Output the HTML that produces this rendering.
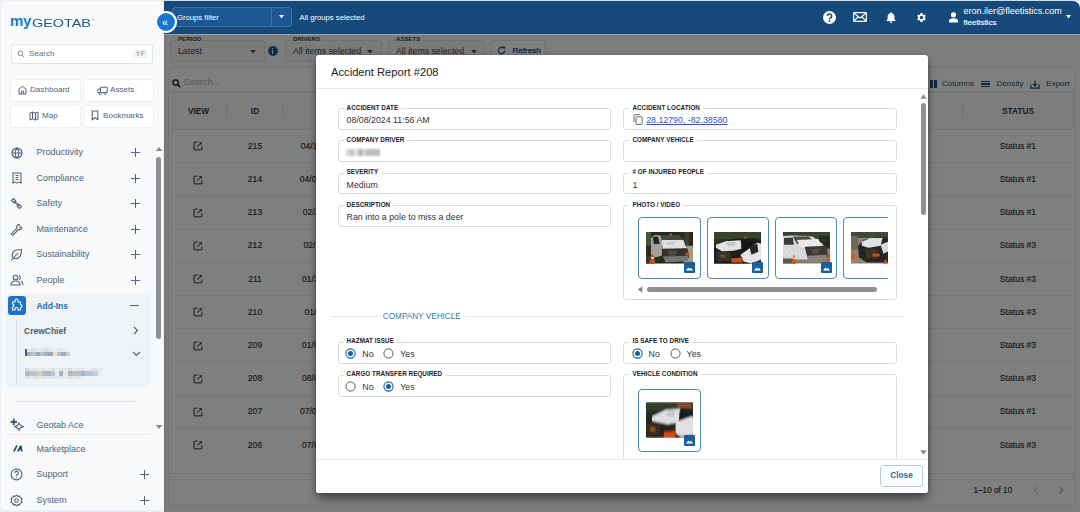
<!DOCTYPE html>
<html><head><meta charset="utf-8">
<style>
*{box-sizing:border-box;margin:0;padding:0}
svg{display:block}
html,body{width:1080px;height:512px;overflow:hidden;background:#fff;font-family:"Liberation Sans",sans-serif;position:relative}
.a{position:absolute}
/* sidebar */
#side{left:0;top:0;width:164px;height:512px;background:#eceff2}
.nav{position:absolute;left:36.5px;font-size:9px;color:#4b6580;white-space:nowrap}
.plus{position:absolute;left:130px;width:9px;height:9px}
.plus:before{content:"";position:absolute;left:0;top:4px;width:9px;height:1px;background:#4b6580}
.plus:after{content:"";position:absolute;left:4px;top:0;width:1px;height:9px;background:#4b6580}
.qbtn{position:absolute;height:20px;background:#fff;border-radius:3px;box-shadow:0 0 0 1px #eef1f4,0 1px 1px #e6eaee;font-size:8px;color:#4b6580;text-align:center;line-height:20px}
/* header */
#hdr{left:164px;top:1px;width:916px;height:33px;background:#154a7a;border-top-right-radius:7px}
/* content */
#content{left:164px;top:34px;width:916px;height:478px;background:#fff}
#overlay{left:164px;top:34px;width:916px;height:478px;background:rgba(0,0,0,0.5)}
/* modal */
#modal{left:316px;top:55px;width:612px;height:437px;background:#fff;border-radius:3px}
.fld{position:absolute;border:1px solid #d9dde2;border-radius:3px;background:#fff}
.lbl{position:absolute;font-size:6.3px;font-weight:bold;color:#222;background:#fff;padding:0 3px;white-space:nowrap;letter-spacing:0.05px}
.val{position:absolute;font-size:8.8px;color:#333;white-space:nowrap}
.fbox{position:absolute;border:1px solid #e0e0e0;border-radius:3px;background:#f6f6f6}
.flbl{position:absolute;font-size:6.1px;font-weight:bold;color:#333;background:#f8fbfb;padding:0 1px;white-space:nowrap}
.ftxt{position:absolute;font-size:8.75px;color:#444;white-space:nowrap}
.cell{position:absolute;font-size:8.6px;color:#333;white-space:nowrap;text-align:center;-webkit-text-stroke:0.15px #333}
.hcell{position:absolute;font-size:8.3px;font-weight:bold;color:#333;white-space:nowrap;text-align:center}
.card{position:absolute;width:62.3px;height:61.7px;border:1px solid #4f86ba;border-radius:4px;background:#fff}
</style></head><body>

<!-- SIDEBAR -->
<div id="side" class="a">
  <div class="a" style="left:1px;top:1px;width:162px;height:509px;background:#f7f9fb;border-radius:5px;box-shadow:0 0 0 1px #eceff3"></div>
  <!-- logo -->
  <div class="a" style="left:10px;top:13px;font-size:15px;line-height:16px;font-weight:bold;color:#1a78cc;letter-spacing:-0.3px">my</div>
  <div class="a" style="left:31.8px;top:16.8px;font-size:11px;line-height:12px;color:#22578a;transform-origin:0 0;transform:scaleX(1.31)">GEOTAB</div>
  <div class="a" style="left:91.5px;top:18.8px;width:3.5px;height:1.2px;background:#b5c4d2"></div>
  <!-- search -->
  <div class="a" style="left:11px;top:44px;width:142px;height:20px;background:#fff;border:1px solid #dde4ea;border-radius:3px"></div>
  <svg class="a" style="left:17px;top:50px" width="8" height="8" viewBox="0 0 8 8"><circle cx="3.4" cy="3.4" r="2.4" fill="none" stroke="#6b7f92" stroke-width="0.9"/><path d="M5.2 5.2L7 7" stroke="#6b7f92" stroke-width="0.9"/></svg>
  <div class="a" style="left:29px;top:49px;font-size:8px;color:#5d7186">Search</div>
  <div class="a" style="left:133px;top:49px;width:14px;height:10px;background:#f1f3f5;border-radius:2px;font-size:7px;color:#7a8a99;text-align:center;line-height:10px">&#8679;F</div>
  <!-- quick buttons -->
  <div class="qbtn" style="left:11px;top:80px;width:69px;height:21px"></div>
  <div class="qbtn" style="left:84px;top:80px;width:69px;height:21px"></div>
  <div class="qbtn" style="left:11px;top:106px;width:69px;height:21px"></div>
  <div class="qbtn" style="left:84px;top:106px;width:69px;height:21px"></div>
  <svg class="a" style="left:18px;top:85px" width="9" height="10" viewBox="0 0 9 10"><path d="M1 4.2L4.5 1.2L8 4.2V9H1Z M3.4 9V6.2H5.6V9" fill="none" stroke="#4b6580" stroke-width="1"/></svg>
  <div class="a" style="left:30px;top:85px;font-size:8.1px;color:#4b6580">Dashboard</div>
  <svg class="a" style="left:97px;top:86px" width="11" height="9" viewBox="0 0 11 9"><path d="M3.5 1.2H10.2V6.6H3.5Z M3.5 3H1.6L0.8 4.6V6.6H3.5" fill="none" stroke="#4b6580" stroke-width="1" stroke-linejoin="round"/><circle cx="3" cy="7.4" r="1.1" fill="#fff" stroke="#4b6580" stroke-width="0.9"/><circle cx="8.2" cy="7.4" r="1.1" fill="#fff" stroke="#4b6580" stroke-width="0.9"/></svg>
  <div class="a" style="left:110px;top:85px;font-size:8.1px;color:#4b6580">Assets</div>
  <svg class="a" style="left:29px;top:111px" width="10" height="10" viewBox="0 0 10 10"><path d="M1 2L3.5 1L6.5 2L9 1V8L6.5 9L3.5 8L1 9Z M3.5 1V8 M6.5 2V9" fill="none" stroke="#4b6580" stroke-width="1"/></svg>
  <div class="a" style="left:42px;top:111px;font-size:8.1px;color:#4b6580">Map</div>
  <svg class="a" style="left:91px;top:109.5px" width="8" height="11" viewBox="0 0 8 11"><path d="M1.2 1H6.8V9.8L4 7.6L1.2 9.8Z" fill="none" stroke="#4b6580" stroke-width="1.1" stroke-linejoin="round"/></svg>
  <div class="a" style="left:103px;top:111px;font-size:8.1px;color:#4b6580">Bookmarks</div>
  <!-- nav -->
  <svg class="a" style="left:11px;top:147.2px" width="12" height="12" viewBox="0 0 12 12"><circle cx="6" cy="6" r="5" fill="none" stroke="#4b6580" stroke-width="1.2"/><path d="M1 6H11 M6 1C3.5 3.5 3.5 8.5 6 11 M6 1C8.5 3.5 8.5 8.5 6 11" fill="none" stroke="#4b6580" stroke-width="1.1"/></svg>
  <div class="nav" style="top:147.2px">Productivity</div><div class="plus" style="top:148.2px;left:131px"></div>
  <svg class="a" style="left:12px;top:172.2px" width="10" height="12" viewBox="0 0 10 12"><path d="M1 1H9V11L7.5 10L5 11L2.5 10L1 11Z M3.5 5.5H6.5 M3.5 7.5H6.5 M3.5 3.5H6.5" fill="none" stroke="#4b6580" stroke-width="1.1"/></svg>
  <div class="nav" style="top:173.2px">Compliance</div><div class="plus" style="top:174.2px;left:131px"></div>
  <svg class="a" style="left:10px;top:197.2px" width="13" height="13" viewBox="0 0 13 13"><path d="M1.5 3.5L3.5 1.5L5.5 3.5L3.5 5.5Z M5 5L8 8 M7.5 9.5L9.5 7.5L11.5 9.5L9.5 11.5Z M4.5 6.5L6.5 4.5 M6.5 8.5L8.5 6.5" fill="none" stroke="#4b6580" stroke-width="1.1"/></svg>
  <div class="nav" style="top:198.2px">Safety</div><div class="plus" style="top:199.2px;left:131px"></div>
  <svg class="a" style="left:10px;top:223.2px" width="13" height="13" viewBox="0 0 13 13"><path d="M8.5 1.2A3 3 0 0 0 7 5.2L1.6 10.6A1.1 1.1 0 0 0 3.2 12L8.5 6.5A3 3 0 0 0 12 4.8L10 4.4L9.7 2.6Z" fill="none" stroke="#4b6580" stroke-width="1.1" stroke-linejoin="round"/></svg>
  <div class="nav" style="top:224.2px">Maintenance</div><div class="plus" style="top:225.2px;left:131px"></div>
  <svg class="a" style="left:10px;top:248.2px" width="13" height="13" viewBox="0 0 13 13"><path d="M3 10C1.5 7 2.5 3 6 2C8 1.4 10 1.5 11.5 1.5C11.5 4 11.5 7 9.5 9C7.5 11 5 11 3 10Z M1.5 12L8 5" fill="none" stroke="#4b6580" stroke-width="1.1" stroke-linecap="round"/></svg>
  <div class="nav" style="top:249.2px">Sustainability</div><div class="plus" style="top:250.2px;left:131px"></div>
  <svg class="a" style="left:10px;top:274.2px" width="14" height="12" viewBox="0 0 14 12"><circle cx="5.5" cy="3.5" r="2.3" fill="none" stroke="#4b6580" stroke-width="1.1"/><path d="M1 11C1 8 3 7 5.5 7C8 7 10 8 10 11Z M9 1.5A2.2 2.2 0 0 1 9 5.6 M11 7.3C12.2 7.8 13 9 13 11" fill="none" stroke="#4b6580" stroke-width="1.1"/></svg>
  <div class="nav" style="top:275.2px">People</div><div class="plus" style="top:276.2px;left:131px"></div>
  <!-- add-ins group -->
  <div class="a" style="left:6px;top:294.2px;width:144px;height:93px;background:#eff3f6;border-radius:3px"></div>
  <div class="a" style="left:8px;top:296.2px;width:18px;height:19px;background:#1a73c9;border-radius:3px"></div>
  <svg class="a" style="left:10px;top:298.2px" width="14" height="14" viewBox="0 0 14 14"><path d="M5 2.5A1.5 1.5 0 0 1 8 2.5V4H10.5V6.5A1.5 1.5 0 0 1 10.5 9.5V12H8V11A1.5 1.5 0 0 0 5 11V12H2.5V9A1.5 1.5 0 0 0 2.5 6V4H5Z" fill="none" stroke="#fff" stroke-width="1.1" stroke-linejoin="round"/></svg>
  <div class="nav" style="top:300.7px;color:#1a6cb8;font-weight:bold;font-size:8.45px">Add-Ins</div>
  <div class="a" style="left:130px;top:305.2px;width:9px;height:1px;background:#4b6580"></div>
  <div class="a" style="left:16px;top:319.2px;width:1px;height:65px;background:#d4dce3"></div>
  <div class="a" style="left:24px;top:325.7px;font-size:8.5px;font-weight:bold;color:#465c72">CrewChief</div>
  <svg class="a" style="left:133px;top:326.2px" width="6" height="9" viewBox="0 0 6 9"><path d="M1 1L4.5 4.5L1 8" fill="none" stroke="#4b6580" stroke-width="1.1"/></svg>
  <div class="a" style="left:25px;top:348.5px;width:1.6px;height:7.5px;background:#4a6078;filter:blur(0.3px)"></div><div class="a" style="left:26.5px;top:348.2px;width:43.0px;height:3.8px;background:linear-gradient(90deg,#e3e8ec 0.0% 10.0%,#dde3e8 10.0% 20.0%,#e6eaee 20.0% 30.0%,#e1e6ea 30.0% 40.0%,#d9e0e6 40.0% 50.0%,#e4e9ed 50.0% 60.0%,#eef1f3 60.0% 70.0%,#e2e7eb 70.0% 80.0%,#e8ecef 80.0% 90.0%,#eef1f3 90.0% 100.0%);filter:blur(0.5px)"></div><div class="a" style="left:26.5px;top:351.8px;width:43.0px;height:4.4px;background:linear-gradient(90deg,#a5b2be 0.0% 10.0%,#b9c4ce 10.0% 20.0%,#98a7b5 20.0% 30.0%,#b5c0ca 30.0% 40.0%,#a2b0bd 40.0% 50.0%,#9aaab8 50.0% 60.0%,#f1e3d2 60.0% 70.0%,#b3bfca 70.0% 80.0%,#9dacb9 80.0% 90.0%,#c3cdd5 90.0% 100.0%);filter:blur(0.5px)"></div>
  <svg class="a" style="left:132px;top:351.2px" width="9" height="6" viewBox="0 0 9 6"><path d="M1 1L4.5 4.5L8 1" fill="none" stroke="#4b6580" stroke-width="1.1"/></svg>
  <div class="a" style="left:25px;top:367.8px;width:77.4px;height:3.6px;background:linear-gradient(90deg,#d3dbe2 0.0% 5.6%,#e3e8ec 5.6% 11.1%,#dfe5ea 11.1% 16.7%,#e7ebee 16.7% 22.2%,#dde3e8 22.2% 27.8%,#e4e9ed 27.8% 33.3%,#dae1e7 33.3% 38.9%,#e5eaee 38.9% 44.4%,#e1e6ea 44.4% 50.0%,#dfe5e9 50.0% 55.6%,#d8dfe5 55.6% 61.1%,#e6ebee 61.1% 66.7%,#dde3e8 66.7% 72.2%,#e2e7eb 72.2% 77.8%,#e9edf0 77.8% 83.3%,#e4e9ec 83.3% 88.9%,#dfe5e9 88.9% 94.4%,#e7ebef 94.4% 100.0%);filter:blur(0.5px)"></div><div class="a" style="left:25px;top:371.4px;width:77.4px;height:4.6px;background:linear-gradient(90deg,#a9b8c6 0.0% 5.6%,#b7c3cd 5.6% 11.1%,#bac5cf 11.1% 16.7%,#d8cfc2 16.7% 22.2%,#b2bfcb 22.2% 27.8%,#a9b7c4 27.8% 33.3%,#bac6d0 33.3% 38.9%,#e9edf0 38.9% 44.4%,#a6b5c3 44.4% 50.0%,#f0e4d6 50.0% 55.6%,#a9b7c5 55.6% 61.1%,#c4bdb3 61.1% 66.7%,#b3c0cb 66.7% 72.2%,#a5b5c5 72.2% 77.8%,#b1c6cf 77.8% 83.3%,#b8c3cd 83.3% 88.9%,#c6d0d8 88.9% 94.4%,#e6ebee 94.4% 100.0%);filter:blur(0.5px)"></div><div class="a" style="left:25px;top:376px;width:77.4px;height:3px;background:linear-gradient(90deg,#dbe2e8 0.0% 5.6%,#e3e8ec 5.6% 11.1%,#d8dfe5 11.1% 16.7%,#e2e7eb 16.7% 22.2%,#dde3e8 22.2% 27.8%,#e6eaee 27.8% 33.3%,#dfe5ea 33.3% 38.9%,#e4e9ed 38.9% 44.4%,#e0e6ea 44.4% 50.0%,#e7ebee 50.0% 55.6%,#dce2e7 55.6% 61.1%,#e5e9ed 61.1% 66.7%,#dee4e9 66.7% 72.2%,#e8ecef 72.2% 77.8%,#f0f2f4 77.8% 83.3%,#eef1f3 83.3% 88.9%,#f0f2f4 88.9% 94.4%,#f2f4f6 94.4% 100.0%);filter:blur(0.5px)"></div>
  <!-- separator -->
  <div class="a" style="left:16px;top:401.2px;width:120px;height:1px;background:#dfe5ea"></div>
  <!-- geotab ace -->
  <svg class="a" style="left:10px;top:418.2px" width="15" height="14" viewBox="0 0 15 14"><path d="M3.8 0.8V7.2 M0.6 4H7" stroke="#3a5874" stroke-width="1.8"/><path d="M9 4.6Q9.5 8 13.6 8.6Q9.5 9.2 9 12.6Q8.5 9.2 4.4 8.6Q8.5 8 9 4.6Z" fill="none" stroke="#56728d" stroke-width="1.1" stroke-linejoin="round"/></svg>
  <div class="nav" style="top:420.2px">Geotab Ace</div>
  <div class="a" style="left:6px;top:434.2px;width:144px;height:1px;background:#e3e8ec"></div>
  <svg class="a" style="left:12px;top:445.2px" width="11" height="7" viewBox="0 0 11 7"><path d="M1 6.5L4 0.5H5.8L2.8 6.5Z M5 6.5L8 0.5H9.6L10.6 6.5H9L8.6 4L6.8 6.5Z" fill="#1d3f66"/></svg>
  <div class="nav" style="top:444.2px">Marketplace</div>
  <svg class="a" style="left:10px;top:468.2px" width="13" height="13" viewBox="0 0 13 13"><circle cx="6.5" cy="6.5" r="5.4" fill="none" stroke="#4b6580" stroke-width="1.1"/><path d="M4.8 5A1.8 1.8 0 1 1 6.5 7V8" fill="none" stroke="#4b6580" stroke-width="1.1"/><circle cx="6.5" cy="9.6" r="0.6" fill="#4b6580"/></svg>
  <div class="nav" style="top:469.2px">Support</div><div class="plus" style="top:470.2px;left:140px"></div>
  <svg class="a" style="left:10px;top:494.2px" width="13" height="13" viewBox="0 0 13 13"><path d="M6.5 1L7.8 2.4L9.6 2L10.2 3.8L12 4.5L11.4 6.5L12 8.5L10.2 9.2L9.6 11L7.8 10.6L6.5 12L5.2 10.6L3.4 11L2.8 9.2L1 8.5L1.6 6.5L1 4.5L2.8 3.8L3.4 2L5.2 2.4Z" fill="none" stroke="#4b6580" stroke-width="1.1" stroke-linejoin="round"/><circle cx="6.5" cy="6.5" r="1.8" fill="none" stroke="#4b6580" stroke-width="1.1"/></svg>
  <div class="nav" style="top:495.2px">System</div><div class="plus" style="top:496.2px;left:140px"></div>
  <!-- scrollbar -->
  <svg class="a" style="left:155px;top:146px" width="8" height="6" viewBox="0 0 8 6"><path d="M0.5 5L4 1L7.5 5Z" fill="#8a8f94"/></svg>
  <div class="a" style="left:155.5px;top:157px;width:5px;height:182px;background:#8d9195;border-radius:3px"></div>
  <svg class="a" style="left:155px;top:424px" width="8" height="6" viewBox="0 0 8 6"><path d="M0.5 1L4 5L7.5 1Z" fill="#8a8f94"/></svg>
</div>

<!-- HEADER -->
<div class="a" style="left:164px;top:0;width:916px;height:1px;background:#d8dfe2"></div><div id="hdr" class="a"></div>
<div class="a" style="left:171.5px;top:7px;width:120px;height:20px;background:#1b5894;border:1px solid #3a73aa;border-radius:3px"></div>
<div class="a" style="left:271px;top:7.5px;width:1px;height:19px;background:#3a73aa"></div>
<div class="a" style="left:177px;top:12.8px;font-size:7.7px;color:#fff;white-space:nowrap">Groups filter</div>
<svg class="a" style="left:278.5px;top:15px" width="5" height="4" viewBox="0 0 5 4"><path d="M0 0H5L2.5 3.5Z" fill="#fff"/></svg>
<div class="a" style="left:299.5px;top:12.8px;font-size:7.7px;color:#fff;white-space:nowrap">All groups selected</div>
<!-- header icons -->
<svg class="a" style="left:823px;top:10.5px" width="13" height="13" viewBox="0 0 13 13"><circle cx="6.5" cy="6.5" r="6.5" fill="#fff"/><path d="M4.4 5.1A2.1 2.1 0 1 1 7.2 7.1C6.6 7.4 6.5 7.7 6.5 8.3" fill="none" stroke="#154a7a" stroke-width="1.5"/><circle cx="6.5" cy="10" r="0.9" fill="#154a7a"/></svg>
<svg class="a" style="left:853px;top:12px" width="14" height="10" viewBox="0 0 14 10"><rect x="0.6" y="0.6" width="12.8" height="8.8" rx="0.8" fill="none" stroke="#fff" stroke-width="1.2"/><path d="M0.8 1L7 6L13.2 1 M0.8 9L5 5 M13.2 9L9 5" fill="none" stroke="#fff" stroke-width="1.1"/></svg>
<svg class="a" style="left:886px;top:11.5px" width="10" height="11" viewBox="0 0 10 11"><path d="M5 0.3C5.6 0.3 5.9 0.7 5.9 1.2C7.6 1.6 8.4 3 8.4 4.8V7.2L9.6 8.6V9H0.4V8.6L1.6 7.2V4.8C1.6 3 2.4 1.6 4.1 1.2C4.1 0.7 4.4 0.3 5 0.3Z M3.6 9.6H6.4A1.4 1.4 0 0 1 3.6 9.6Z" fill="#fff"/></svg>
<svg class="a" style="left:915.5px;top:11.5px" width="11" height="11" viewBox="0 0 24 24"><path fill="#fff" d="M19.14 12.94c.04-.3.06-.61.06-.94 0-.32-.02-.64-.07-.94l2.03-1.58a.49.49 0 0 0 .12-.61l-1.92-3.32a.488.488 0 0 0-.59-.22l-2.39.96c-.5-.38-1.03-.7-1.62-.94l-.36-2.54a.484.484 0 0 0-.48-.41h-3.84c-.24 0-.43.17-.47.41l-.36 2.54c-.59.24-1.13.57-1.62.94l-2.39-.96c-.22-.08-.47 0-.59.22L2.74 8.87c-.12.21-.08.47.12.61l2.03 1.58c-.05.3-.09.63-.09.94s.02.64.07.94l-2.03 1.58a.49.49 0 0 0-.12.61l1.92 3.32c.12.22.37.29.59.22l2.39-.96c.5.38 1.03.7 1.62.94l.36 2.54c.05.24.24.41.48.41h3.84c.24 0 .44-.17.47-.41l.36-2.54c.59-.24 1.13-.56 1.62-.94l2.39.96c.22.08.47 0 .59-.22l1.92-3.32c.12-.22.07-.47-.12-.61l-2.01-1.58zM12 15.6c-1.98 0-3.6-1.62-3.6-3.6s1.62-3.6 3.6-3.6 3.6 1.62 3.6 3.6-1.62 3.6-3.6 3.6z"/></svg>
<svg class="a" style="left:948.5px;top:11.5px" width="9" height="11" viewBox="0 0 9 11"><circle cx="4.5" cy="2.8" r="2.6" fill="#fff"/><path d="M0 10.5V9C0 7.2 1.8 6.2 4.5 6.2C7.2 6.2 9 7.2 9 9V10.5Z" fill="#fff"/></svg>
<div class="a" style="left:963.5px;top:5.6px;font-size:9px;color:#fff;white-space:nowrap">eron.iler@fleetistics.com</div>
<div class="a" style="left:963.5px;top:17.5px;font-size:8px;color:#f0f4f8;white-space:nowrap;-webkit-text-stroke:0.2px #f0f4f8">fleetistics</div>
<svg class="a" style="left:1065.5px;top:14.5px" width="5" height="4" viewBox="0 0 5 4"><path d="M0 0H5L2.5 3.5Z" fill="#fff"/></svg>

<!-- CONTENT -->
<div id="content" class="a">
</div>
<div class="a" style="left:164px;top:34px;width:916px;height:478px;background:#f8fbfb"></div>
<div class="a" style="left:164px;top:34px;width:3px;height:478px;background:#f0f2f2"></div>
<!-- filter bar -->
<div class="fbox" style="left:170px;top:40px;width:94.5px;height:21.5px"></div>
<div class="flbl" style="left:177px;top:34.6px">PERIOD</div>
<div class="ftxt" style="left:178px;top:45.5px">Latest</div>
<svg class="a" style="left:250px;top:49.5px" width="6" height="4" viewBox="0 0 6 4"><path d="M0 0H6L3 3.5Z" fill="#555"/></svg>
<div class="a" style="left:267.5px;top:45.5px;width:10.5px;height:10.5px;border-radius:50%;background:#1b5e9c"></div>
<div class="a" style="left:272.2px;top:47.5px;width:1.3px;height:1.3px;background:#fff"></div>
<div class="a" style="left:272.2px;top:49.5px;width:1.3px;height:4px;background:#fff"></div>
<div class="fbox" style="left:285px;top:40px;width:97px;height:21.5px"></div>
<div class="flbl" style="left:292px;top:34.6px">DRIVERS</div>
<div class="ftxt" style="left:293px;top:45.5px">All items selected</div>
<svg class="a" style="left:367px;top:49.5px" width="6" height="4" viewBox="0 0 6 4"><path d="M0 0H6L3 3.5Z" fill="#555"/></svg>
<div class="fbox" style="left:388px;top:40px;width:97px;height:21.5px"></div>
<div class="flbl" style="left:395px;top:34.6px">ASSETS</div>
<div class="ftxt" style="left:396px;top:45.5px">All items selected</div>
<svg class="a" style="left:471px;top:49.5px" width="6" height="4" viewBox="0 0 6 4"><path d="M0 0H6L3 3.5Z" fill="#555"/></svg>
<div class="fbox" style="left:491px;top:40px;width:55px;height:21.5px;background:#fff"></div>
<svg class="a" style="left:497px;top:46px" width="9" height="9" viewBox="0 0 9 9"><path d="M7.6 4.5A3.1 3.1 0 1 1 6.6 2.2" fill="none" stroke="#1d4f80" stroke-width="1.2"/><path d="M5.3 0.6H8.2V3.5Z" fill="#1d4f80"/></svg>
<div class="ftxt" style="left:512.5px;top:45.9px;color:#1d4f80;font-size:8.1px;-webkit-text-stroke:0.25px #1d4f80">Refresh</div>
<!-- table container -->
<div class="a" style="left:167.5px;top:67px;width:907.5px;height:439px;background:#fcfefe;border:1px solid #e6e8e8;border-radius:3px"></div>
<svg class="a" style="left:171.5px;top:78.5px" width="9" height="9" viewBox="0 0 9 9"><circle cx="3.6" cy="3.6" r="2.7" fill="none" stroke="#111" stroke-width="1.2"/><path d="M5.6 5.6L8.3 8.3" stroke="#111" stroke-width="1.4"/></svg>
<div class="a" style="left:183.5px;top:77px;font-size:9.3px;color:#b0b0b0">Search...</div>
<div class="a" style="left:930px;top:79.5px;width:2.5px;height:8px;background:#1d4f80"></div>
<div class="a" style="left:934px;top:79.5px;width:2.5px;height:8px;background:#1d4f80"></div>
<div class="ftxt" style="left:942px;top:78.5px;color:#1d4f80;font-size:8.1px">Columns</div>
<div class="a" style="left:981px;top:80.5px;width:8.5px;height:1.6px;background:#1d4f80"></div>
<div class="a" style="left:981px;top:83.2px;width:8.5px;height:1.6px;background:#1d4f80"></div>
<div class="a" style="left:981px;top:85.9px;width:8.5px;height:1.6px;background:#1d4f80"></div>
<div class="ftxt" style="left:996.5px;top:78.5px;color:#1d4f80;font-size:8.1px">Density</div>
<svg class="a" style="left:1030px;top:79.5px" width="10" height="9" viewBox="0 0 10 9"><path d="M0.8 4.5V8.2H9.2V4.5 M5 0.5V5.8 M2.8 3.8L5 6L7.2 3.8" fill="none" stroke="#1d4f80" stroke-width="1.2"/></svg>
<div class="ftxt" style="left:1046px;top:78.5px;color:#1d4f80;font-size:8.1px">Export</div>
<div class="a" style="left:171px;top:91px;width:903px;height:1px;background:#e4e4e4"></div>
<div class="a" style="left:171px;top:92px;width:903px;height:36.5px;background:#fbfbfb"></div>
<div class="a" style="left:171px;top:128.5px;width:901px;height:1px;background:#e4e6e6"></div>
<div class="a" style="left:170.5px;top:91px;width:1px;height:382px;background:#f0f2f2"></div>
<div class="hcell" style="left:171px;width:55px;top:106px">VIEW</div>
<div class="a" style="left:226px;top:104px;width:1px;height:13px;background:#e0e0e0"></div>
<div class="hcell" style="left:226px;width:58px;top:106px">ID</div>
<div class="a" style="left:283px;top:104px;width:1px;height:13px;background:#e0e0e0"></div>
<div class="a" style="left:962px;top:104px;width:1px;height:13px;background:#e0e0e0"></div>
<div class="hcell" style="left:962px;width:112px;top:106px">STATUS</div>
<div class="a" style="left:171px;top:162.2px;width:901px;height:1px;background:#ebeded"></div>
<div class="a" style="left:193px;top:141.3px;width:10px;height:10px"><svg width="10" height="10" viewBox="0 0 10 10"><path d="M4.6 1.1H2.2A1.1 1.1 0 0 0 1.1 2.2V7.8A1.1 1.1 0 0 0 2.2 8.9H7.8A1.1 1.1 0 0 0 8.9 7.8V5.4" fill="none" stroke="#5e5e5e" stroke-width="1.3"/><path d="M5.8 1.1H8.9V4.2Z" fill="#5e5e5e"/><path d="M8.4 1.6L4.3 5.7" stroke="#5e5e5e" stroke-width="1.2"/></svg></div>
<div class="cell" style="left:226px;width:58px;top:140.8px">215</div>
<div class="cell" style="left:300.7px;top:140.8px;text-align:left">04/12/2024 11:56 AM</div>
<div class="cell" style="left:962px;width:112px;top:140.8px">Status #1</div>
<div class="a" style="left:171px;top:195.4px;width:901px;height:1px;background:#ebeded"></div>
<div class="a" style="left:193px;top:174.5px;width:10px;height:10px"><svg width="10" height="10" viewBox="0 0 10 10"><path d="M4.6 1.1H2.2A1.1 1.1 0 0 0 1.1 2.2V7.8A1.1 1.1 0 0 0 2.2 8.9H7.8A1.1 1.1 0 0 0 8.9 7.8V5.4" fill="none" stroke="#5e5e5e" stroke-width="1.3"/><path d="M5.8 1.1H8.9V4.2Z" fill="#5e5e5e"/><path d="M8.4 1.6L4.3 5.7" stroke="#5e5e5e" stroke-width="1.2"/></svg></div>
<div class="cell" style="left:226px;width:58px;top:174.0px">214</div>
<div class="cell" style="left:299.8px;top:174.0px;text-align:left">04/02/2024 11:56 AM</div>
<div class="cell" style="left:962px;width:112px;top:174.0px">Status #1</div>
<div class="a" style="left:171px;top:228.6px;width:901px;height:1px;background:#ebeded"></div>
<div class="a" style="left:193px;top:207.7px;width:10px;height:10px"><svg width="10" height="10" viewBox="0 0 10 10"><path d="M4.6 1.1H2.2A1.1 1.1 0 0 0 1.1 2.2V7.8A1.1 1.1 0 0 0 2.2 8.9H7.8A1.1 1.1 0 0 0 8.9 7.8V5.4" fill="none" stroke="#5e5e5e" stroke-width="1.3"/><path d="M5.8 1.1H8.9V4.2Z" fill="#5e5e5e"/><path d="M8.4 1.6L4.3 5.7" stroke="#5e5e5e" stroke-width="1.2"/></svg></div>
<div class="cell" style="left:226px;width:58px;top:207.2px">213</div>
<div class="cell" style="left:302.7px;top:207.2px;text-align:left">02/21/2024 11:56 AM</div>
<div class="cell" style="left:962px;width:112px;top:207.2px">Status #1</div>
<div class="a" style="left:171px;top:261.8px;width:901px;height:1px;background:#ebeded"></div>
<div class="a" style="left:193px;top:240.9px;width:10px;height:10px"><svg width="10" height="10" viewBox="0 0 10 10"><path d="M4.6 1.1H2.2A1.1 1.1 0 0 0 1.1 2.2V7.8A1.1 1.1 0 0 0 2.2 8.9H7.8A1.1 1.1 0 0 0 8.9 7.8V5.4" fill="none" stroke="#5e5e5e" stroke-width="1.3"/><path d="M5.8 1.1H8.9V4.2Z" fill="#5e5e5e"/><path d="M8.4 1.6L4.3 5.7" stroke="#5e5e5e" stroke-width="1.2"/></svg></div>
<div class="cell" style="left:226px;width:58px;top:240.4px">212</div>
<div class="cell" style="left:303.5px;top:240.4px;text-align:left">02/14/2024 11:56 AM</div>
<div class="cell" style="left:962px;width:112px;top:240.4px">Status #3</div>
<div class="a" style="left:171px;top:295.0px;width:901px;height:1px;background:#ebeded"></div>
<div class="a" style="left:193px;top:274.1px;width:10px;height:10px"><svg width="10" height="10" viewBox="0 0 10 10"><path d="M4.6 1.1H2.2A1.1 1.1 0 0 0 1.1 2.2V7.8A1.1 1.1 0 0 0 2.2 8.9H7.8A1.1 1.1 0 0 0 8.9 7.8V5.4" fill="none" stroke="#5e5e5e" stroke-width="1.3"/><path d="M5.8 1.1H8.9V4.2Z" fill="#5e5e5e"/><path d="M8.4 1.6L4.3 5.7" stroke="#5e5e5e" stroke-width="1.2"/></svg></div>
<div class="cell" style="left:226px;width:58px;top:273.6px">211</div>
<div class="cell" style="left:302px;top:273.6px;text-align:left">01/30/2024 11:56 AM</div>
<div class="cell" style="left:962px;width:112px;top:273.6px">Status #3</div>
<div class="a" style="left:171px;top:328.2px;width:901px;height:1px;background:#ebeded"></div>
<div class="a" style="left:193px;top:307.3px;width:10px;height:10px"><svg width="10" height="10" viewBox="0 0 10 10"><path d="M4.6 1.1H2.2A1.1 1.1 0 0 0 1.1 2.2V7.8A1.1 1.1 0 0 0 2.2 8.9H7.8A1.1 1.1 0 0 0 8.9 7.8V5.4" fill="none" stroke="#5e5e5e" stroke-width="1.3"/><path d="M5.8 1.1H8.9V4.2Z" fill="#5e5e5e"/><path d="M8.4 1.6L4.3 5.7" stroke="#5e5e5e" stroke-width="1.2"/></svg></div>
<div class="cell" style="left:226px;width:58px;top:306.8px">210</div>
<div class="cell" style="left:304.5px;top:306.8px;text-align:left">01/18/2024 11:56 AM</div>
<div class="cell" style="left:962px;width:112px;top:306.8px">Status #3</div>
<div class="a" style="left:171px;top:361.4px;width:901px;height:1px;background:#ebeded"></div>
<div class="a" style="left:193px;top:340.5px;width:10px;height:10px"><svg width="10" height="10" viewBox="0 0 10 10"><path d="M4.6 1.1H2.2A1.1 1.1 0 0 0 1.1 2.2V7.8A1.1 1.1 0 0 0 2.2 8.9H7.8A1.1 1.1 0 0 0 8.9 7.8V5.4" fill="none" stroke="#5e5e5e" stroke-width="1.3"/><path d="M5.8 1.1H8.9V4.2Z" fill="#5e5e5e"/><path d="M8.4 1.6L4.3 5.7" stroke="#5e5e5e" stroke-width="1.2"/></svg></div>
<div class="cell" style="left:226px;width:58px;top:340.0px">209</div>
<div class="cell" style="left:302px;top:340.0px;text-align:left">01/05/2024 11:56 AM</div>
<div class="cell" style="left:962px;width:112px;top:340.0px">Status #3</div>
<div class="a" style="left:171px;top:394.6px;width:901px;height:1px;background:#ebeded"></div>
<div class="a" style="left:193px;top:373.7px;width:10px;height:10px"><svg width="10" height="10" viewBox="0 0 10 10"><path d="M4.6 1.1H2.2A1.1 1.1 0 0 0 1.1 2.2V7.8A1.1 1.1 0 0 0 2.2 8.9H7.8A1.1 1.1 0 0 0 8.9 7.8V5.4" fill="none" stroke="#5e5e5e" stroke-width="1.3"/><path d="M5.8 1.1H8.9V4.2Z" fill="#5e5e5e"/><path d="M8.4 1.6L4.3 5.7" stroke="#5e5e5e" stroke-width="1.2"/></svg></div>
<div class="cell" style="left:226px;width:58px;top:373.2px">208</div>
<div class="cell" style="left:302px;top:373.2px;text-align:left">08/08/2024 11:56 AM</div>
<div class="cell" style="left:962px;width:112px;top:373.2px">Status #3</div>
<div class="a" style="left:171px;top:427.8px;width:901px;height:1px;background:#ebeded"></div>
<div class="a" style="left:193px;top:406.9px;width:10px;height:10px"><svg width="10" height="10" viewBox="0 0 10 10"><path d="M4.6 1.1H2.2A1.1 1.1 0 0 0 1.1 2.2V7.8A1.1 1.1 0 0 0 2.2 8.9H7.8A1.1 1.1 0 0 0 8.9 7.8V5.4" fill="none" stroke="#5e5e5e" stroke-width="1.3"/><path d="M5.8 1.1H8.9V4.2Z" fill="#5e5e5e"/><path d="M8.4 1.6L4.3 5.7" stroke="#5e5e5e" stroke-width="1.2"/></svg></div>
<div class="cell" style="left:226px;width:58px;top:406.4px">207</div>
<div class="cell" style="left:299.9px;top:406.4px;text-align:left">07/08/2024 11:56 AM</div>
<div class="cell" style="left:962px;width:112px;top:406.4px">Status #1</div>
<div class="a" style="left:193px;top:440.1px;width:10px;height:10px"><svg width="10" height="10" viewBox="0 0 10 10"><path d="M4.6 1.1H2.2A1.1 1.1 0 0 0 1.1 2.2V7.8A1.1 1.1 0 0 0 2.2 8.9H7.8A1.1 1.1 0 0 0 8.9 7.8V5.4" fill="none" stroke="#5e5e5e" stroke-width="1.3"/><path d="M5.8 1.1H8.9V4.2Z" fill="#5e5e5e"/><path d="M8.4 1.6L4.3 5.7" stroke="#5e5e5e" stroke-width="1.2"/></svg></div>
<div class="cell" style="left:226px;width:58px;top:439.6px">206</div>
<div class="cell" style="left:302px;top:439.6px;text-align:left">07/02/2024 11:56 AM</div>
<div class="cell" style="left:962px;width:112px;top:439.6px">Status #3</div>
<div class="a" style="left:168px;top:472.5px;width:906px;height:1px;background:#e6e8e8"></div><div class="a" style="left:168px;top:479px;width:906px;height:1px;background:#f0f2f2"></div>
<div class="cell" style="left:973.5px;top:485.5px;font-size:8.2px;text-align:left">1&#8211;10 of 10</div>
<svg class="a" style="left:1032.5px;top:486.3px" width="6" height="8" viewBox="0 0 6 8"><path d="M4.8 0.6L1.5 4L4.8 7.4" fill="none" stroke="#c4c4c4" stroke-width="1.1"/></svg>
<svg class="a" style="left:1057.5px;top:486.3px" width="6" height="8" viewBox="0 0 6 8"><path d="M1.2 0.6L4.5 4L1.2 7.4" fill="none" stroke="#aaa" stroke-width="1.2"/></svg>
<div id="overlay" class="a"></div>

<svg width="0" height="0" style="position:absolute"><defs><filter id="pb" x="0" y="0" width="100%" height="100%"><feGaussianBlur in="SourceGraphic" stdDeviation="0.75" result="b"/><feTurbulence type="fractalNoise" baseFrequency="0.8" numOctaves="2" seed="3" result="n"/><feColorMatrix in="n" type="matrix" values="0 0 0 0 0  0 0 0 0 0  0 0 0 0 0  0 0 0 0.45 -0.12" result="na"/><feComposite in="na" in2="b" operator="in" result="nb"/><feMerge><feMergeNode in="b"/><feMergeNode in="nb"/></feMerge></filter></defs></svg>
<div class="a" style="left:164px;top:33.8px;width:916px;height:1px;background:#9ea2a5"></div>
<!-- MODAL -->
<div class="a" style="left:316px;top:55px;width:612px;height:437.5px;background:#fff;border-radius:3px;box-shadow:0 6px 10px -1px rgba(0,0,0,0.5),0 0 4px rgba(0,0,0,0.2)"></div>
<div class="a" style="left:331px;top:65.8px;font-size:11.2px;color:#222;white-space:nowrap">Accident Report #208</div>
<div class="a" style="left:316px;top:87.9px;width:612px;height:1px;background:#e8eaed"></div>
<div class="fld" style="left:337.6px;top:108.1px;width:273.6px;height:21.6px"></div>
<div class="lbl" style="left:343.6px;top:103.7px">ACCIDENT DATE</div>
<div class="val" style="left:346.6px;top:115.4px;">08/08/2024 11:56 AM</div>
<div class="fld" style="left:337.6px;top:140.3px;width:273.6px;height:21.6px"></div>
<div class="lbl" style="left:343.6px;top:135.9px">COMPANY DRIVER</div>
<div class="a" style="left:346px;top:148.5px;width:34px;height:7px;background:linear-gradient(90deg,#d6d6d6 0 12%,#c2c2c2 12% 25%,#e4e4e4 25% 35%,#b5b5b5 35% 50%,#dadada 50% 60%,#bdbdbd 60% 100%);filter:blur(1px)"></div>
<div class="fld" style="left:337.6px;top:172.6px;width:273.6px;height:21.6px"></div>
<div class="lbl" style="left:343.6px;top:168.2px">SEVERITY</div>
<div class="val" style="left:346.6px;top:179.9px;">Medium</div>
<div class="fld" style="left:337.6px;top:205.1px;width:273.6px;height:21.6px"></div>
<div class="lbl" style="left:343.6px;top:200.7px">DESCRIPTION</div>
<div class="val" style="left:346.6px;top:212.4px;">Ran into a pole to miss a deer</div>
<div class="fld" style="left:623.4px;top:108.1px;width:273.6px;height:21.6px"></div>
<div class="lbl" style="left:629.4px;top:103.7px">ACCIDENT LOCATION</div>
<svg class="a" style="left:633px;top:114px" width="10" height="11" viewBox="0 0 10 11"><rect x="3" y="2.8" width="6.2" height="7.6" rx="0.8" fill="none" stroke="#666" stroke-width="1"/><path d="M1 8.2V1.8A1.1 1.1 0 0 1 2.1 0.7H6.8" fill="none" stroke="#666" stroke-width="1"/></svg>
<div class="val" style="left:646.2px;top:115.4px;color:#2f55d4;text-decoration:underline">28.12790, -82.38580</div>
<div class="fld" style="left:623.4px;top:140.3px;width:273.6px;height:21.6px"></div>
<div class="lbl" style="left:629.4px;top:135.9px">COMPANY VEHICLE</div>
<div class="fld" style="left:623.4px;top:172.6px;width:273.6px;height:21.6px"></div>
<div class="lbl" style="left:629.4px;top:168.2px"># OF INJURED PEOPLE</div>
<div class="val" style="left:632.4px;top:179.9px;">1</div>
<div class="fld" style="left:623.4px;top:204.9px;width:273.6px;height:95px"></div>
<div class="lbl" style="left:629.4px;top:200.5px">PHOTO / VIDEO</div>
<div class="a" style="left:636px;top:214px;width:252px;height:68px;overflow:hidden">
<div class="card" style="left:2.2999999999999545px;top:3.1999999999999886px"></div>
<svg class="a" style="left:9.799999999999955px;top:17.99999999999999px" width="47.3" height="31.5" viewBox="0 0 48 32" preserveAspectRatio="none"><g filter="url(#pb)"><rect width="48" height="32" fill="#2c3124"/><rect width="5" height="14" fill="#4d5a36"/><rect x="39" width="5" height="16" fill="#4a3f33"/><path d="M40 14H48V32H38Z" fill="#ada28c"/><path d="M0 24H8V32H0Z" fill="#3e3c38"/><path d="M5 6L9 3L15 3.5L17 9L16 24L9 26L5 23Z" fill="#a9a9a9"/><path d="M7 5L12 4.5L14 12L8 12.5Z" fill="#262826"/><path d="M15 3.5L34 3L38 8.5L16 9Z" fill="#4c4c4c"/><path d="M16 8L38 8L41 17L17 17.5Z" fill="#ececec"/><path d="M20 10L30 9.5L28 13L22 13Z" fill="#d6d6d6"/><path d="M16 17L42 16.5L44 26L19 28Z" fill="#3a3632"/><path d="M22 19L32 19L30 24L24 24Z" fill="#5b5047"/><path d="M17 25L43 24L42 29.5L20 31Z" fill="#7e7c78"/><path d="M40 21L44 21L44 24L40 24Z" fill="#d0541e"/><path d="M6.5 21L9.5 31.5H3.5Z" fill="#e2571b"/><path d="M5 25.5H8V27H5Z" fill="#f1f1f1"/><path d="M24 1.6H26.5V3.6H24Z" fill="#e55a1e"/></g></svg>
<svg class="a" style="left:47.99999999999996px;top:48.19999999999999px" width="11" height="11" viewBox="0 0 11 11"><rect width="11" height="11" rx="1" fill="#1b5e9c"/><path d="M2 8.5L4.3 5.5L5.8 7L7 5.8L9 8.5Z" fill="#fff"/></svg>
<div class="card" style="left:70.60000000000002px;top:3.1999999999999886px"></div>
<svg class="a" style="left:78.10000000000002px;top:17.99999999999999px" width="47.3" height="31.5" viewBox="0 0 48 32" preserveAspectRatio="none"><g filter="url(#pb)"><rect width="48" height="32" fill="#2e3826"/><rect width="48" height="7" fill="#3e4a2f"/><path d="M0 16L10 10L20 7L42 6L48 8V32H0Z" fill="#262420"/><path d="M31 4.5H33V6.5H31Z" fill="#e0581c"/><path d="M2 13L12 9.5L27 8.5L28 17L20 19L8 19.5L2 16Z" fill="#ededed"/><path d="M12 11L22 10L21 14L14 14Z" fill="#d0d0d0"/><path d="M28 9L40 8L38 18L28 19Z" fill="#1f1f1e"/><path d="M27 23L44 11L48 12V28L38 32L30 30Z" fill="#f0f0f0"/><path d="M36 15L44 12L45 20L38 23Z" fill="#2b2b2b"/><path d="M2 20L16 20L18 29L3 30Z" fill="#3e352d"/><path d="M6 23L12 23L11 26L7 26Z" fill="#6a5848"/><path d="M17 27L29 26L29 31L18 31Z" fill="#d4541c"/></g></svg>
<svg class="a" style="left:116.30000000000003px;top:48.19999999999999px" width="11" height="11" viewBox="0 0 11 11"><rect width="11" height="11" rx="1" fill="#1b5e9c"/><path d="M2 8.5L4.3 5.5L5.8 7L7 5.8L9 8.5Z" fill="#fff"/></svg>
<div class="card" style="left:139px;top:3.1999999999999886px"></div>
<svg class="a" style="left:146.5px;top:17.99999999999999px" width="47.3" height="31.5" viewBox="0 0 48 32" preserveAspectRatio="none"><g filter="url(#pb)"><rect width="48" height="32" fill="#8c877a"/><rect width="48" height="7" fill="#3f4935"/><path d="M36 4H48V17H36Z" fill="#2c302a"/><path d="M0 4L12 3.5L30 4.5L40 12L46 22L40 28L10 28L0 27Z" fill="#e4e4e4"/><path d="M1 6L10 5.5L11 13L1 13Z" fill="#3c3f3e"/><path d="M10 4.5L26 4.5L32 10L14 12Z" fill="#505352"/><path d="M21 3H23V4.5H21Z" fill="#e0581c"/><path d="M14 8L36 7L39 15L19 16Z" fill="#f5f5f5"/><path d="M22 15L44 14L46 25L25 27Z" fill="#403c37"/><path d="M28 17L38 17L36 22L30 22Z" fill="#5e5246"/><path d="M24 24L44 23L44 28.5L27 30Z" fill="#8c8a85"/><path d="M0 27H12V32H0Z" fill="#5e5a54"/><path d="M11 22L13.5 32H8.5Z" fill="#e2571b"/><path d="M10 26H12.5V27.3H10Z" fill="#f0f0f0"/><path d="M46 20L48 30H44Z" fill="#e2571b"/></g></svg>
<svg class="a" style="left:184.7px;top:48.19999999999999px" width="11" height="11" viewBox="0 0 11 11"><rect width="11" height="11" rx="1" fill="#1b5e9c"/><path d="M2 8.5L4.3 5.5L5.8 7L7 5.8L9 8.5Z" fill="#fff"/></svg>
<div class="card" style="left:207.29999999999995px;top:3.1999999999999886px"></div>
<svg class="a" style="left:214.79999999999995px;top:17.99999999999999px" width="47.3" height="31.5" viewBox="0 0 48 32" preserveAspectRatio="none"><g filter="url(#pb)"><rect width="48" height="32" fill="#948c7d"/><rect width="48" height="6" fill="#46503c"/><path d="M0 4H7V18H0Z" fill="#756e62"/><path d="M7 14L13 8L26 5L40 6L46 9L46 26L38 31L16 31L8 26Z" fill="#2d2b28"/><path d="M11 10L20 6L32 6L30 14L18 16L11 14Z" fill="#ececec"/><path d="M30 13L40 9L41 18L33 22Z" fill="#e2e2e2"/><path d="M14 18L26 17L26 26L16 27Z" fill="#413a33"/><path d="M22 22L29 22L29 25L22 25Z" fill="#d2541c"/><path d="M2 18L4.5 28H0Z" fill="#e2571b"/><path d="M35 27L37.5 32H33Z" fill="#e2571b"/></g></svg>
<svg class="a" style="left:252.99999999999994px;top:48.19999999999999px" width="11" height="11" viewBox="0 0 11 11"><rect width="11" height="11" rx="1" fill="#1b5e9c"/><path d="M2 8.5L4.3 5.5L5.8 7L7 5.8L9 8.5Z" fill="#fff"/></svg>
</div>
<svg class="a" style="left:636.8px;top:286.2px" width="6" height="7" viewBox="0 0 6 7"><path d="M5.4 0.3V6.7L0.6 3.5Z" fill="#8a8a8a"/></svg>
<div class="a" style="left:646.5px;top:287.3px;width:230.5px;height:5px;background:#8f8f8f;border-radius:3px"></div>
<div class="a" style="left:330.5px;top:316.3px;width:49px;height:1px;background:#e6e8eb"></div>
<div class="a" style="left:464.5px;top:316.3px;width:439px;height:1px;background:#e6e8eb"></div>
<div class="a" style="left:382.8px;top:311.8px;font-size:8.2px;color:#3a79b2;white-space:nowrap">COMPANY VEHICLE</div>
<div class="fld" style="left:337.6px;top:341.5px;width:273.6px;height:22px"></div>
<div class="lbl" style="left:343.6px;top:337.1px">HAZMAT ISSUE</div>
<svg class="a" style="left:345.2px;top:347.8px" width="11" height="11" viewBox="0 0 11 11"><circle cx="5.5" cy="5.5" r="4.6" fill="none" stroke="#1b5e9c" stroke-width="1.1"/><circle cx="5.5" cy="5.5" r="2.5" fill="#1b5e9c"/></svg>
<div class="val" style="left:362.3px;top:349.0px">No</div>
<svg class="a" style="left:383.2px;top:347.8px" width="11" height="11" viewBox="0 0 11 11"><circle cx="5.5" cy="5.5" r="4.6" fill="none" stroke="#555" stroke-width="1"/></svg>
<div class="val" style="left:400.3px;top:349.0px">Yes</div>
<div class="fld" style="left:337.6px;top:374.5px;width:273.6px;height:22px"></div>
<div class="lbl" style="left:343.6px;top:370.1px">CARGO TRANSFER REQUIRED</div>
<svg class="a" style="left:345.2px;top:380.5px" width="11" height="11" viewBox="0 0 11 11"><circle cx="5.5" cy="5.5" r="4.6" fill="none" stroke="#555" stroke-width="1"/></svg>
<div class="val" style="left:362.3px;top:381.7px">No</div>
<svg class="a" style="left:383.2px;top:380.5px" width="11" height="11" viewBox="0 0 11 11"><circle cx="5.5" cy="5.5" r="4.6" fill="none" stroke="#1b5e9c" stroke-width="1.1"/><circle cx="5.5" cy="5.5" r="2.5" fill="#1b5e9c"/></svg>
<div class="val" style="left:400.3px;top:381.7px">Yes</div>
<div class="fld" style="left:623.4px;top:341.5px;width:273.6px;height:22px"></div>
<div class="lbl" style="left:629.4px;top:337.1px">IS SAFE TO DRIVE</div>
<svg class="a" style="left:631.5px;top:347.8px" width="11" height="11" viewBox="0 0 11 11"><circle cx="5.5" cy="5.5" r="4.6" fill="none" stroke="#1b5e9c" stroke-width="1.1"/><circle cx="5.5" cy="5.5" r="2.5" fill="#1b5e9c"/></svg>
<div class="val" style="left:648.6px;top:349.0px">No</div>
<svg class="a" style="left:669.5px;top:347.8px" width="11" height="11" viewBox="0 0 11 11"><circle cx="5.5" cy="5.5" r="4.6" fill="none" stroke="#555" stroke-width="1"/></svg>
<div class="val" style="left:686.6px;top:349.0px">Yes</div>
<div class="fld" style="left:623.4px;top:374.3px;width:273.6px;height:100px"></div>
<div class="lbl" style="left:629.4px;top:369.9px">VEHICLE CONDITION</div>
<div class="card" style="left:638.4px;top:389.4px;height:62.4px"></div>
<svg class="a" style="left:645.9px;top:402.3px" width="47.3" height="35.8" viewBox="0 0 48 32" preserveAspectRatio="none"><g filter="url(#pb)"><rect width="48" height="32" fill="#2c3326"/><rect width="48" height="8" fill="#39432e"/><path d="M32 2H46V5H32Z" fill="#a8553a"/><path d="M0 14L16 7L38 5L48 8V32H0Z" fill="#282522"/><path d="M6 13L20 7L35 6L33 18L22 20L6 17Z" fill="#e9e9eb"/><path d="M20 9L30 8L28 13L22 13Z" fill="#d0d0d4"/><path d="M34 8L46 8L46 18L34 19Z" fill="#1e2020"/><path d="M30 18L46 13L48 14V29L36 31L30 28Z" fill="#ededed"/><path d="M0 18L14 19L16 30L0 30Z" fill="#3a2e24"/><path d="M4 22L10 23L9 27L4 26Z" fill="#8a5a30"/><path d="M18 27L30 26L30 32L18 32Z" fill="#e34d1a"/></g></svg>
<svg class="a" style="left:684.1px;top:435.2px" width="11" height="11" viewBox="0 0 11 11"><rect width="11" height="11" rx="1" fill="#1b5e9c"/><path d="M2 8.5L4.3 5.5L5.8 7L7 5.8L9 8.5Z" fill="#fff"/></svg>
<div class="a" style="left:316px;top:459px;width:612px;height:33.5px;background:#fff;border-radius:0 0 3px 3px;border-top:1px solid #e8eaed"></div>
<div class="a" style="left:880.4px;top:465.3px;width:42.6px;height:21.5px;border:1px solid #b3cbe0;border-radius:3px;background:#fff"></div>
<div class="a" style="left:890.3px;top:470.6px;font-size:8.25px;font-weight:bold;color:#2a6a9e;white-space:nowrap">Close</div>
<svg class="a" style="left:919.8px;top:93.6px" width="7" height="5" viewBox="0 0 7 5"><path d="M0.2 4.8L3.5 0.3L6.8 4.8Z" fill="#8d8d8d"/></svg>
<div class="a" style="left:921px;top:103px;width:5px;height:112px;background:#8f8f8f;border-radius:3px"></div>
<svg class="a" style="left:920px;top:450px" width="7" height="5" viewBox="0 0 7 5"><path d="M0.2 0.2L3.5 4.7L6.8 0.2Z" fill="#8d8d8d"/></svg>

<div class="a" style="left:154.5px;top:11px;width:22px;height:22px;border-radius:50%;background:#1a78cc;border:2px solid #fff"></div>
<div class="a" style="left:158.5px;top:16.3px;width:13px;font-size:10.5px;line-height:12px;color:#fff;text-align:center">&#171;</div>
</body></html>
